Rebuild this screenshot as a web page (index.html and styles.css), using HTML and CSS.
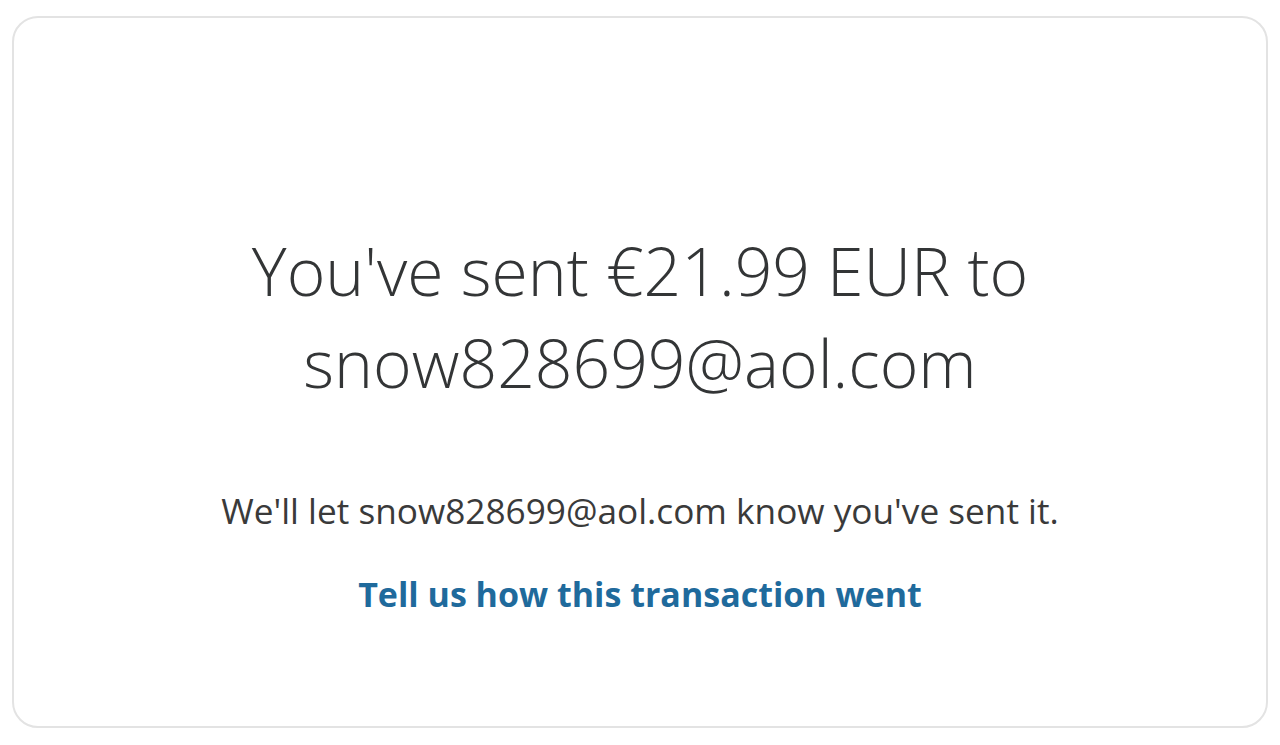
FILE: index.html
```html
<!DOCTYPE html>
<html lang="en">
<head>
    <meta charset="UTF-8">
    <meta name="viewport" content="width=device-width, initial-scale=1.0">
    <title>Payment Sent</title>
    <link rel="stylesheet" href="styles.css">
</head>
<body>
    <div class="card">
        <h1 class="sent-title">You've sent €21.99 EUR to snow828699@aol.com</h1>
        <p class="sent-note">We'll let snow828699@aol.com know you've sent it.</p>
        <a class="feedback-link" href="#">Tell us how this transaction went</a>
    </div>
</body>
</html>
```

FILE: styles.css
```css
body, html {
    margin: 0;
    padding: 0;
    background-color: #ffffff;
    font-family: "Open Sans", Arial, sans-serif;
}

.card {
    box-sizing: border-box;
    width: 1256px;
    height: 712px;
    margin: 16px 12px 0;
    padding: 206px 0 0;
    border: 2px solid #e3e3e3;
    border-radius: 26px;
    display: flex;
    flex-direction: column;
    align-items: center;
    text-align: center;
}

.sent-title {
    margin: 0;
    width: 800px;
    font-size: 66px;
    font-weight: 300;
    line-height: 92px;
    color: #333536;
}

.sent-note {
    margin: 82px 0 0;
    font-size: 35.2px;
    line-height: 40px;
    color: #3a3a3a;
}

.feedback-link {
    margin-top: 44px;
    font-size: 34px;
    font-weight: 700;
    line-height: 40px;
    color: #1f6a9c;
    text-decoration: none;
}
```
